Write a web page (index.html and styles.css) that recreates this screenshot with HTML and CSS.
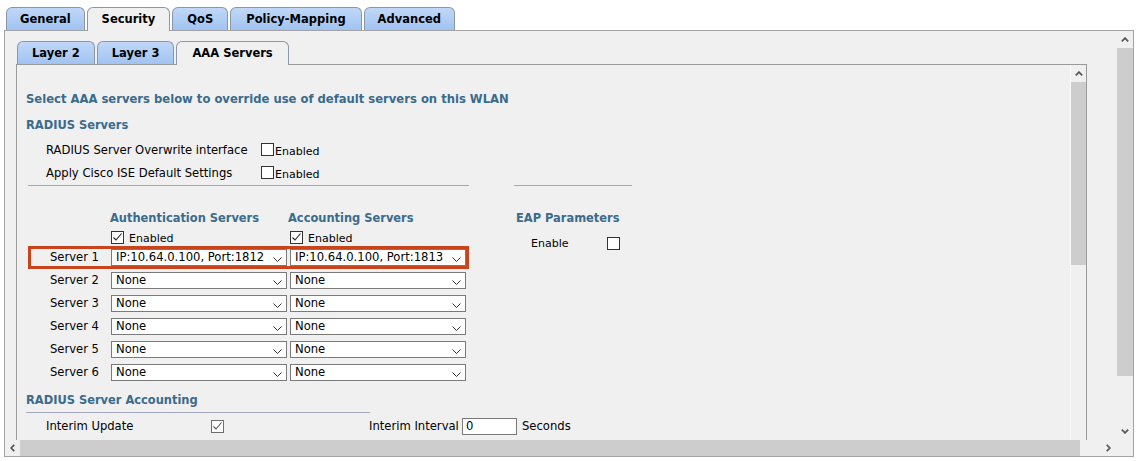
FILE: index.html
```html
<!DOCTYPE html>
<html>
<head>
<meta charset="utf-8">
<title>WLAN Security - AAA Servers</title>
<link rel="stylesheet" href="styles.css">
</head>
<body>
<div class="tabs top-tabs">
  <div class="tab">General</div>
  <div class="tab active">Security</div>
  <div class="tab wide">QoS</div>
  <div class="tab wider">Policy-Mapping</div>
  <div class="tab">Advanced</div>
</div>
<div class="frame outer">
  <div class="view outer-view">
    <div class="tabs sub-tabs">
      <div class="tab">Layer 2</div>
      <div class="tab">Layer 3</div>
      <div class="tab active">AAA Servers</div>
    </div>
    <div class="frame inner">
      <div class="view inner-view">
        <div class="intro">Select AAA servers below to override use of default servers on this WLAN</div>
        <div class="section-title">RADIUS Servers</div>
        <div class="opt-row first"><span class="opt-label">RADIUS Server Overwrite interface</span><span class="cb"></span><span class="cb-text">Enabled</span></div>
        <div class="opt-row"><span class="opt-label">Apply Cisco ISE Default Settings</span><span class="cb"></span><span class="cb-text">Enabled</span></div>
        <div class="panels">
          <div class="panel servers">
            <div class="srv-grid head">
              <span></span><span class="col-title auth">Authentication Servers</span><span class="col-title acct">Accounting Servers</span>
            </div>
            <div class="srv-grid enable">
              <span></span>
              <span class="en"><span class="cb checked"><svg width="13" height="13" viewBox="0 0 13 13"><path d="M2.5 6.5 L5 9 L10.5 2.5"/></svg></span><span class="en-text">Enabled</span></span>
              <span class="en"><span class="cb checked"><svg width="13" height="13" viewBox="0 0 13 13"><path d="M2.5 6.5 L5 9 L10.5 2.5"/></svg></span><span class="en-text">Enabled</span></span>
            </div>
            <div class="srv-list">
              <div class="srv-grid srv-row hl"><span class="srv-label">Server 1</span><div class="select"><span>IP:10.64.0.100, Port:1812</span><svg class="chev" width="9" height="5" viewBox="0 0 9 5"><path d="M0.5 0.5 L4.5 4.5 L8.5 0.5"/></svg></div><div class="select"><span>IP:10.64.0.100, Port:1813</span><svg class="chev" width="9" height="5" viewBox="0 0 9 5"><path d="M0.5 0.5 L4.5 4.5 L8.5 0.5"/></svg></div></div>
              <div class="srv-grid srv-row"><span class="srv-label">Server 2</span><div class="select"><span>None</span><svg class="chev" width="9" height="5" viewBox="0 0 9 5"><path d="M0.5 0.5 L4.5 4.5 L8.5 0.5"/></svg></div><div class="select"><span>None</span><svg class="chev" width="9" height="5" viewBox="0 0 9 5"><path d="M0.5 0.5 L4.5 4.5 L8.5 0.5"/></svg></div></div>
              <div class="srv-grid srv-row"><span class="srv-label">Server 3</span><div class="select"><span>None</span><svg class="chev" width="9" height="5" viewBox="0 0 9 5"><path d="M0.5 0.5 L4.5 4.5 L8.5 0.5"/></svg></div><div class="select"><span>None</span><svg class="chev" width="9" height="5" viewBox="0 0 9 5"><path d="M0.5 0.5 L4.5 4.5 L8.5 0.5"/></svg></div></div>
              <div class="srv-grid srv-row"><span class="srv-label">Server 4</span><div class="select"><span>None</span><svg class="chev" width="9" height="5" viewBox="0 0 9 5"><path d="M0.5 0.5 L4.5 4.5 L8.5 0.5"/></svg></div><div class="select"><span>None</span><svg class="chev" width="9" height="5" viewBox="0 0 9 5"><path d="M0.5 0.5 L4.5 4.5 L8.5 0.5"/></svg></div></div>
              <div class="srv-grid srv-row"><span class="srv-label">Server 5</span><div class="select"><span>None</span><svg class="chev" width="9" height="5" viewBox="0 0 9 5"><path d="M0.5 0.5 L4.5 4.5 L8.5 0.5"/></svg></div><div class="select"><span>None</span><svg class="chev" width="9" height="5" viewBox="0 0 9 5"><path d="M0.5 0.5 L4.5 4.5 L8.5 0.5"/></svg></div></div>
              <div class="srv-grid srv-row"><span class="srv-label">Server 6</span><div class="select"><span>None</span><svg class="chev" width="9" height="5" viewBox="0 0 9 5"><path d="M0.5 0.5 L4.5 4.5 L8.5 0.5"/></svg></div><div class="select"><span>None</span><svg class="chev" width="9" height="5" viewBox="0 0 9 5"><path d="M0.5 0.5 L4.5 4.5 L8.5 0.5"/></svg></div></div>
            </div>
          </div>
          <div class="panel eap">
            <div class="col-title eap-title">EAP Parameters</div>
            <div class="eap-row"><span class="eap-label">Enable</span><span class="cb"></span></div>
          </div>
        </div>
        <div class="acct-title"><span>RADIUS Server Accounting</span></div>
        <div class="interim-row">
          <span class="interim-label">Interim Update</span>
          <span class="cb checked soft"><svg width="13" height="13" viewBox="0 0 13 13"><path d="M2.5 6.5 L5 9 L10.5 2.5"/></svg></span>
          <span class="interval-label">Interim Interval</span>
          <span class="num-input">0</span>
          <span class="unit">Seconds</span>
        </div>
      </div>
      <div class="vscroll inner-vs">
        <div class="sb-btn"><svg width="8" height="5" viewBox="0 0 8 5"><path d="M0.8 4.3 L4 1.1 L7.2 4.3"/></svg></div>
        <div class="thumb"></div>
        <div class="track"></div>
      </div>
    </div>
  </div>
  <div class="vscroll outer-vs">
    <div class="sb-btn"><svg width="8" height="5" viewBox="0 0 8 5"><path d="M0.8 4.3 L4 1.1 L7.2 4.3"/></svg></div>
    <div class="thumb"></div>
    <div class="track"></div>
    <div class="sb-btn"><svg width="8" height="5" viewBox="0 0 8 5"><path d="M0.8 0.7 L4 3.9 L7.2 0.7"/></svg></div>
  </div>
  <div class="hscroll">
    <div class="sb-btn"><svg width="5" height="8" viewBox="0 0 5 8"><path d="M4.3 0.8 L1.1 4 L4.3 7.2"/></svg></div>
    <div class="thumb"></div>
    <div class="track"></div>
    <div class="sb-btn"><svg width="5" height="8" viewBox="0 0 5 8"><path d="M0.7 0.8 L3.9 4 L0.7 7.2"/></svg></div>
  </div>
  <div class="corner"></div>
</div>
</body>
</html>
```

FILE: styles.css
```css
* { box-sizing: border-box; }
html, body { margin: 0; padding: 0; }
body {
  width: 1139px;
  height: 461px;
  overflow: hidden;
  background: #ffffff;
  font-family: "DejaVu Sans", Verdana, sans-serif;
  font-size: 11.6px;
  color: #000;
}

/* ---------- tabs ---------- */
.tabs { display: flex; gap: 2px; align-items: flex-start; }
.top-tabs { padding: 7px 0 0 6px; height: 30px; }
.sub-tabs { margin-left: 1px; height: 23px; }
.tab {
  height: 23px;
  padding: 0 13px;
  border: 1px solid #8c97a6;
  border-bottom: none;
  border-radius: 6px 6px 0 0;
  background: linear-gradient(#c0d8f8, #a1c3f2);
  font-size: 11.5px;
  font-weight: bold;
  line-height: 22px;
  white-space: nowrap;
}
.tab.wide { padding: 0 14px; }
.tab.wider { padding: 0 15px; }
.sub-tabs .tab { padding: 0 14px; }
.tab.active,
.sub-tabs .tab.active {
  height: 24px;
  padding: 0 14px;
  background: #f0f0f0;
  position: relative;
  z-index: 1;
}
.sub-tabs .tab.active { padding: 0 15px; }

/* ---------- frames ---------- */
.frame {
  border: 1px solid #a3a3a3;
  background: #f0f0f0;
  display: grid;
}
.outer {
  margin-left: 4px;
  width: 1130px;
  height: 427px;
  grid-template-columns: 1fr 16px;
  grid-template-rows: 1fr 16px;
}
.view { min-width: 0; min-height: 0; overflow: hidden; }
.outer-view { padding: 10px 0 0 11px; }
.inner {
  width: 1071px;
  height: 430px;
  border-color: #9a9a9a;
  grid-template-columns: 1fr 16px;
}
.inner-view { padding: 0 0 0 9px; }

/* ---------- scrollbars ---------- */
.vscroll { display: flex; flex-direction: column; background: #f0f0f0; }
.hscroll { display: flex; background: #f0f0f0; }
.sb-btn { display: flex; align-items: center; justify-content: center; flex: none; }
.sb-btn svg path { fill: none; stroke: #555; stroke-width: 1.7; }
.vscroll .sb-btn { height: 17px; }
.hscroll .sb-btn { width: 15px; }
.hscroll .sb-btn:last-child { width: 17px; }
.thumb { background: #cdcdcd; flex: none; }
.track { flex: 1; }
.inner-vs { border-left: 1px solid #fafafa; }
.inner-vs .thumb { height: 183px; }
.outer-vs .thumb { height: 328px; }
.hscroll .thumb { width: 1060px; }
.corner { background: #f0f0f0; }

/* ---------- content ---------- */
.intro, .section-title, .col-title, .acct-title span {
  color: #3a6b8c;
  font-weight: bold;
  font-size: 11.45px;
}
.intro { margin-top: 24px; height: 20px; line-height: 20px; white-space: nowrap; font-size: 11.6px; }
.section-title { margin-top: 6px; height: 20px; line-height: 20px; }

.opt-row {
  height: 23px;
  padding-left: 20px;
  display: flex;
  align-items: center;
}
.opt-row.first { margin-top: 3px; }
.opt-label { width: 215px; white-space: nowrap; }
.cb {
  width: 13px;
  height: 13px;
  border: 1px solid #333;
  background: #fff;
  flex: none;
  display: inline-flex;
}
.cb svg { margin: -1px; }
.cb svg path { fill: none; stroke: #222; stroke-width: 1.1; }
.cb.soft { border-color: #6e6e6e; }
.cb.soft svg path { stroke: #555; }
.cb-text { font-size: 11px; padding-top: 3px; margin-left: 1px; }

.panels { display: flex; margin: 1px 0 0 2px; }
.panel { border-top: 1px solid #a3a8c0; }
.servers { width: 441px; padding-top: 22px; }
.eap { width: 118px; margin-left: 45px; padding-top: 22px; }

.srv-grid {
  display: grid;
  grid-template-columns: 77px 176px 176px;
  column-gap: 3px;
  margin-left: 3px;
  width: 435px;
}
.head { height: 20px; line-height: 20px; }
.col-title { white-space: nowrap; }
.col-title.auth { margin-left: -1px; }
.col-title.acct { margin-left: -2px; }
.enable { height: 18px; align-items: center; }
.en { display: flex; align-items: center; }
.en-text { font-size: 11px; margin-left: 5px; padding-top: 3px; }

.srv-list { padding-top: 3px; display: flex; flex-direction: column; gap: 6px; }
.srv-row { height: 17px; }
.srv-row.hl { outline: 3px solid #c8441c; }
.srv-label { text-align: right; padding-right: 9px; line-height: 17px; white-space: nowrap; }
.select {
  height: 17px;
  border: 1px solid #7a7a7a;
  background: #fff;
  display: flex;
  align-items: center;
  justify-content: space-between;
  padding: 0 4px 0 4px;
  white-space: nowrap;
  line-height: 15px;
}
.chev { fill: none; stroke: #333; stroke-width: 1; margin-top: 3px; flex: none; }

.eap-title { margin-left: 2px; height: 20px; line-height: 20px; }
.eap-row {
  margin-top: 6px;
  height: 18px;
  display: flex;
  align-items: center;
  padding-left: 17px;
}
.eap-label { font-size: 11px; width: 76px; padding-top: 1px; }

.acct-title {
  margin-top: 9px;
  width: 344px;
  height: 23px;
  line-height: 21px;
  border-bottom: 1px solid #a3a8c0;
}
.interim-row {
  height: 25px;
  padding-top: 1px;
  display: flex;
  align-items: center;
  padding-left: 20px;
}
.interim-label { width: 165px; white-space: nowrap; }
.interval-label { margin-left: 145px; width: 93px; white-space: nowrap; }
.num-input {
  width: 55px;
  height: 17px;
  border: 1px solid #7a7a7a;
  background: #fff;
  padding-left: 3px;
  line-height: 15px;
}
.unit { margin-left: 5px; }
```
